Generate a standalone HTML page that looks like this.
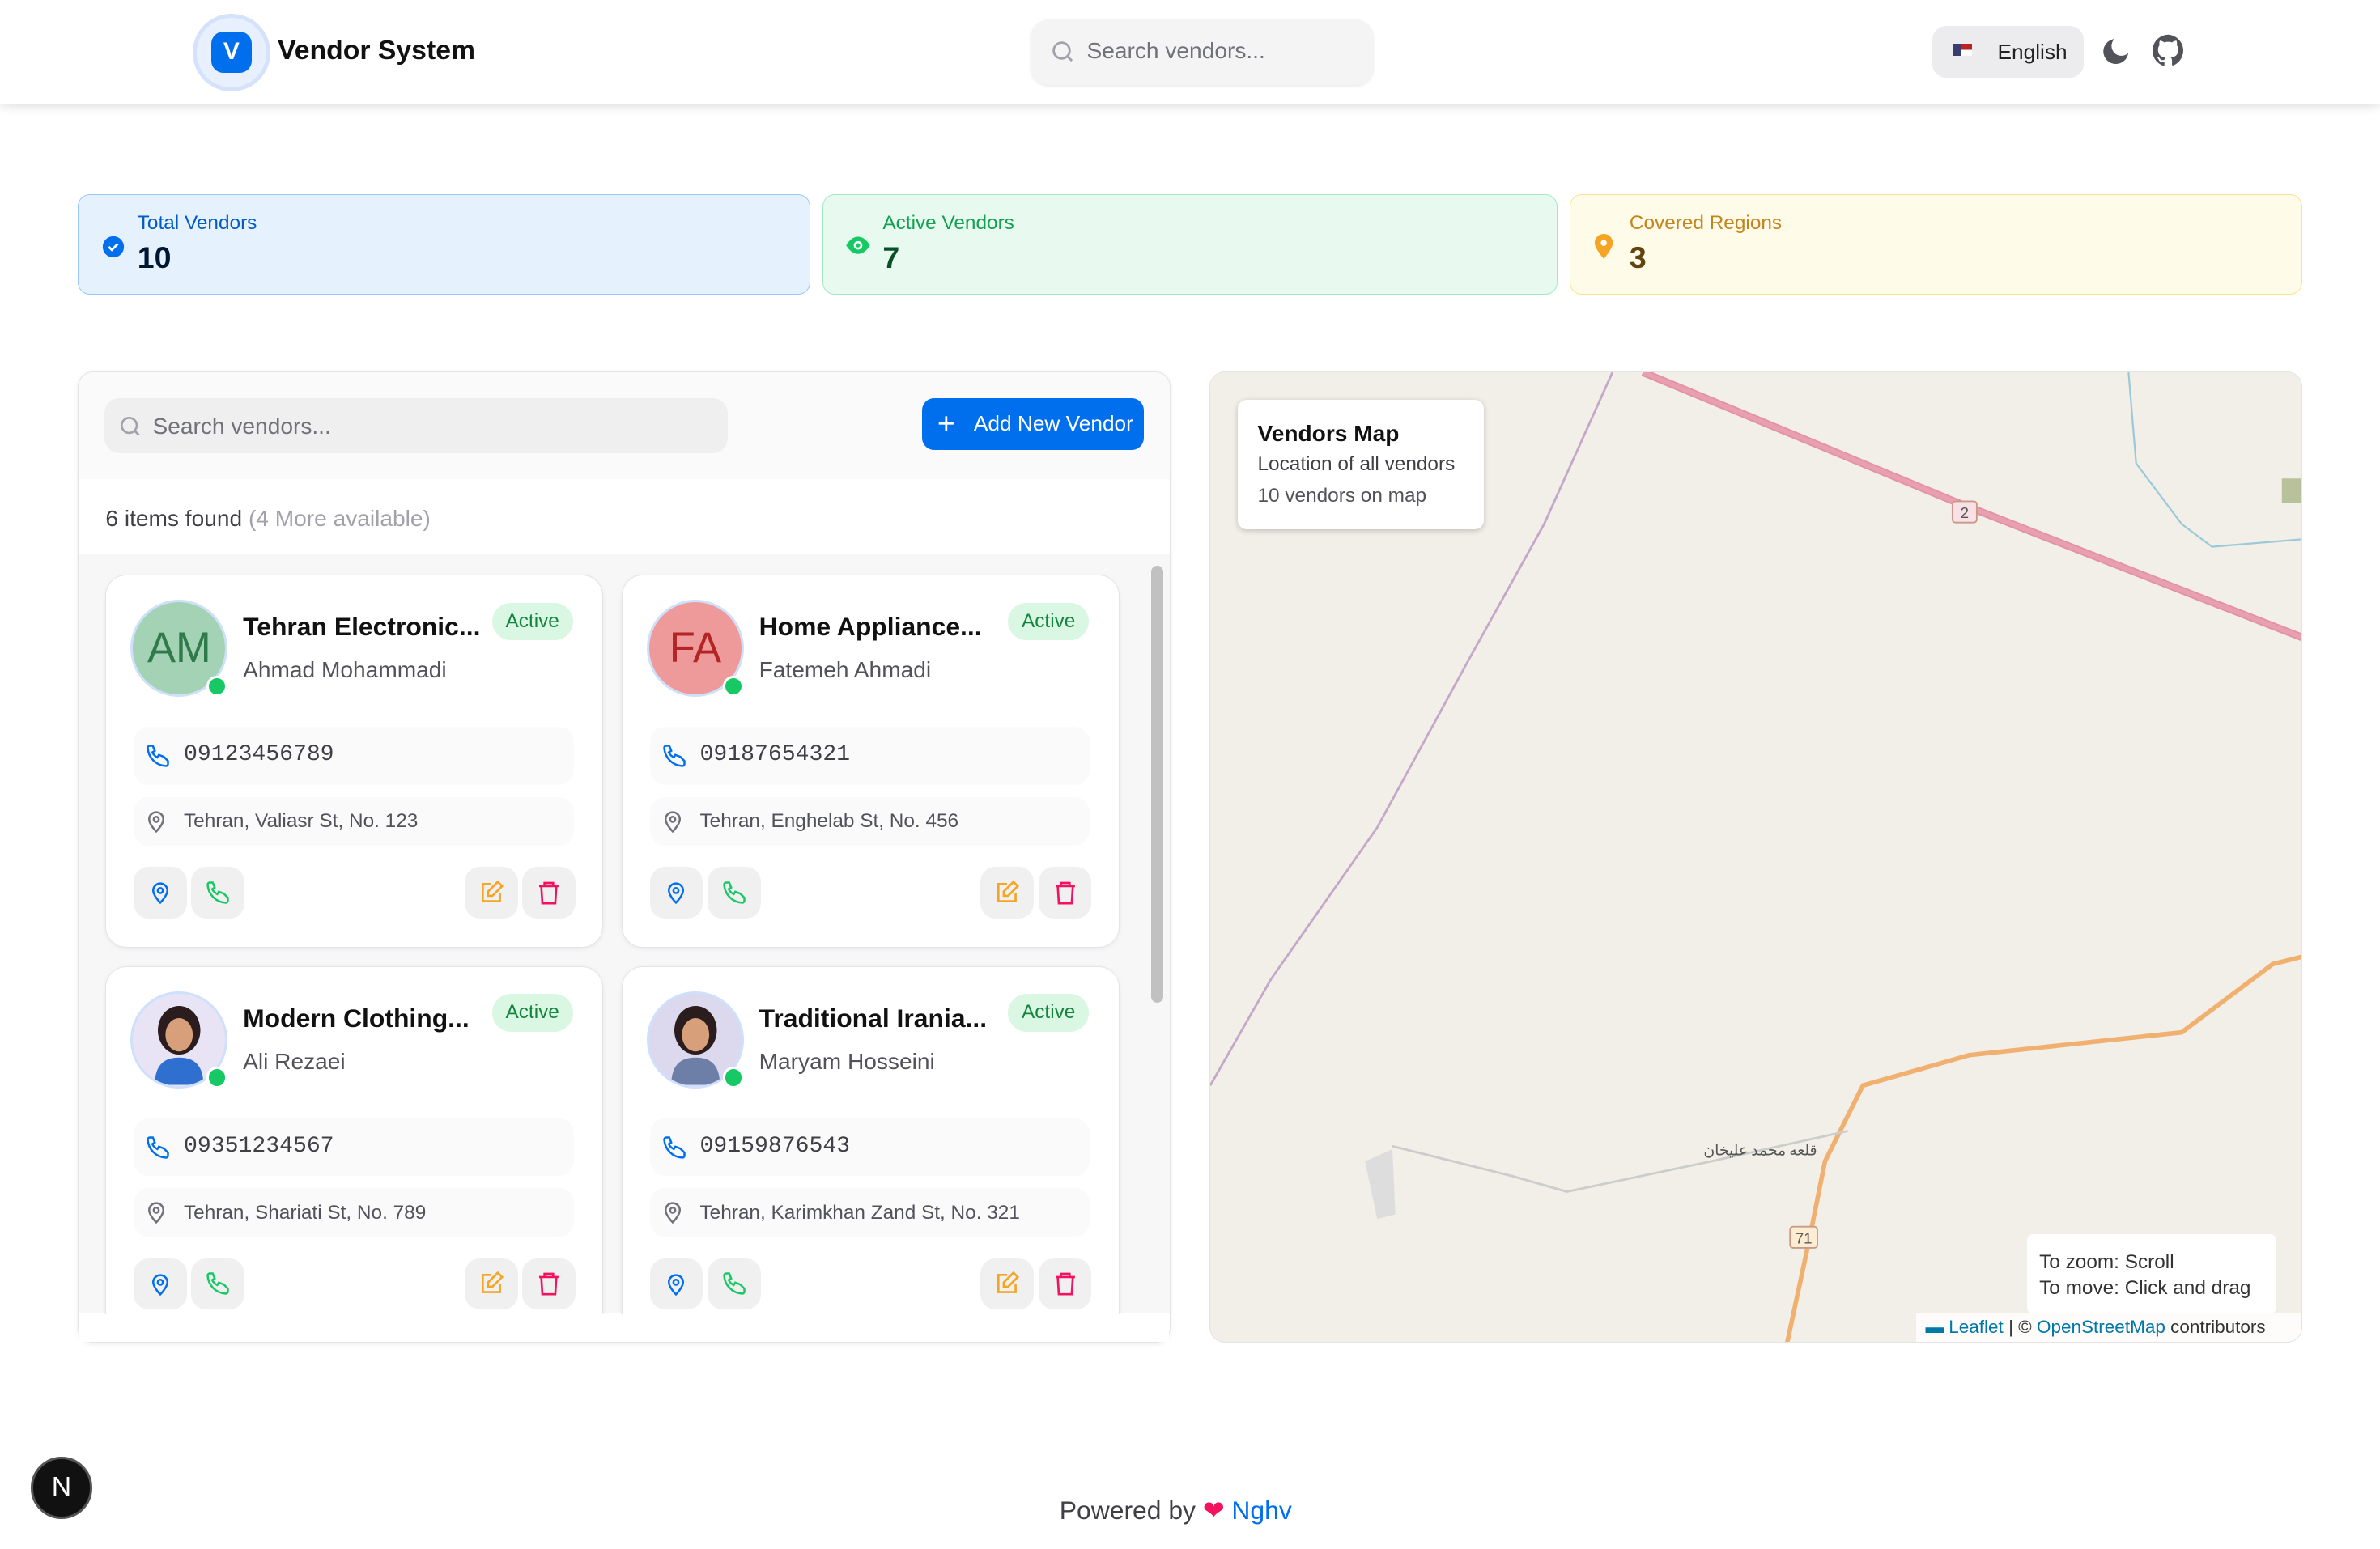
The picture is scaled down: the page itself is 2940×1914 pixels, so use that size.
<!DOCTYPE html>
<html><head><meta charset="utf-8"><style>
html{zoom:1.875}
*{box-sizing:border-box;margin:0;padding:0}
body{width:1568px;height:1021px;background:#fff;font-family:"Liberation Sans",sans-serif;position:relative;overflow:hidden;color:#111}
.abs{position:absolute}
.hdr{left:0;top:0;width:1568px;height:68px;background:#fff;box-shadow:0 2px 6px rgba(0,0,0,.12)}
.stat{top:128px;height:66px;border-radius:8px;border:1px solid}
.stat .l{position:absolute;left:39px;top:11px;font-size:13px}
.stat .n{position:absolute;left:39px;top:30px;font-size:20px;font-weight:bold}
.panel{left:51px;top:245px;width:720px;height:640px;border:1px solid #e4e4e7;border-radius:10px;background:#fafafa;box-shadow:0 1px 3px rgba(0,0,0,.08);overflow:hidden}
.card{width:328px;height:246px;background:#fff;border:1px solid #e4e4e7;border-radius:14px;box-shadow:0 1px 3px rgba(0,0,0,.06)}
.av{left:16px;top:16px;width:64px;height:64px;border-radius:50%;border:2px solid #cfe0fb;font-size:28px;display:flex;align-items:center;justify-content:center;overflow:hidden}
.dot{left:66px;top:66px;width:14px;height:14px;border-radius:50%;background:#17c964;border:2px solid #fff}
.ti{left:90px;top:24px;font-size:17px;font-weight:bold;width:165px;white-space:nowrap;overflow:hidden;text-overflow:ellipsis}
.sub{left:90px;top:54px;font-size:15px;color:#52525b}
.badge{left:254px;top:18px;height:25px;padding:0 9px;border-radius:13px;background:#d9f7e2;color:#12843e;font-size:13px;line-height:25px}
.row{left:18px;width:290px;border-radius:10px;background:#fafafa}
.btn{top:192px;width:35px;height:34px;border-radius:10px;background:#f0f0f1;display:flex;align-items:center;justify-content:center}
</style></head><body>
<div class="abs hdr">
 <div class="abs" style="left:127px;top:9px;width:51px;height:51px;border-radius:50%;border:3px solid #d4e3fb;background:#e8f0fd"></div>
 <div class="abs" style="left:139px;top:21px;width:27px;height:27px;border-radius:8px;background:#006fee;color:#fff;font-size:16px;font-weight:bold;text-align:center;line-height:27px">V</div>
 <div class="abs" style="left:183px;top:23px;font-size:18px;font-weight:bold">Vendor System</div>
 <div class="abs" style="left:679px;top:13px;width:226px;height:43px;border-radius:12px;background:#f4f4f5;box-shadow:0 1px 2px rgba(0,0,0,.08)"></div>
 <svg class="abs" style="left:691px;top:25px" width="18" height="18" viewBox="0 0 24 24" fill="none" stroke="#a1a1aa" stroke-width="2"><circle cx="11" cy="11" r="7"/><path d="M20 20l-4-4"/></svg>
 <div class="abs" style="left:716px;top:25px;font-size:15px;color:#71717a">Search vendors...</div>
 <div class="abs" style="left:1273px;top:17px;width:100px;height:34px;border-radius:9px;background:#ececee"></div>
 <div class="abs" style="left:1287px;top:29px;width:12px;height:8px;background:linear-gradient(#b22 0 50%,#fff 50%);border-left:5px solid #3c3b6e"></div>
 <div class="abs" style="left:1316px;top:26px;font-size:14px;color:#222">English</div>
 <svg class="abs" style="left:1383px;top:23px" width="22" height="22" viewBox="0 0 24 24"><path d="M21 13A9 9 0 1 1 11 3a7 7 0 0 0 10 10z" fill="#52525b"/></svg>
 <svg class="abs" style="left:1417px;top:22px" width="23" height="23" viewBox="0 0 24 24"><path fill="#52525b" d="M12 1a11 11 0 0 0-3.5 21.4c.6.1.8-.2.8-.5v-2c-3.1.7-3.8-1.4-3.8-1.4-.5-1.3-1.2-1.6-1.2-1.6-1-.7.1-.7.1-.7 1.1.1 1.7 1.1 1.7 1.1 1 1.7 2.6 1.2 3.2.9.1-.7.4-1.2.7-1.5-2.5-.3-5.1-1.2-5.1-5.5 0-1.2.4-2.2 1.1-3-.1-.3-.5-1.4.1-3 0 0 .9-.3 3 1.1a10.4 10.4 0 0 1 5.5 0c2.1-1.4 3-1.1 3-1.1.6 1.6.2 2.7.1 3 .7.8 1.1 1.8 1.1 3 0 4.3-2.6 5.2-5.1 5.5.4.4.8 1 .8 2v3c0 .3.2.6.8.5A11 11 0 0 0 12 1z"/></svg>
</div>

<div class="abs stat" style="left:51px;width:483px;background:#e6f1fe;border-color:#99c7fb"><svg class="abs" style="left:15px;top:26px" width="16" height="16" viewBox="0 0 16 16"><circle cx="8" cy="8" r="7" fill="#006fee"/><path d="M5 8l2 2 4-4" stroke="#fff" stroke-width="1.5" fill="none"/></svg><div class="l" style="color:#005bc4">Total Vendors</div><div class="n" style="color:#001731">10</div></div>
<div class="abs stat" style="left:542px;width:484px;background:#e8faf0;border-color:#a2e9c1"><svg class="abs" style="left:14px;top:26px" width="17" height="14" viewBox="0 0 24 18"><path d="M1 9s4-8 11-8 11 8 11 8-4 8-11 8S1 9 1 9z" fill="#17c964"/><circle cx="12" cy="9" r="4" fill="#fff"/><circle cx="12" cy="9" r="2" fill="#17c964"/></svg><div class="l" style="color:#12a150">Active Vendors</div><div class="n" style="color:#095028">7</div></div>
<div class="abs stat" style="left:1034px;width:483px;background:#fefce8;border-color:#fbe38e"><svg class="abs" style="left:15px;top:25px" width="14" height="18" viewBox="0 0 14 18"><path d="M7 17S1 10 1 6.5a6 6 0 0 1 12 0C13 10 7 17 7 17z" fill="#f5a524"/><circle cx="7" cy="6.5" r="2" fill="#fff"/></svg><div class="l" style="color:#c4841d">Covered Regions</div><div class="n" style="color:#62420e">3</div></div>

<div class="abs panel">
 <div class="abs" style="left:17px;top:17px;width:411px;height:36px;border-radius:10px;background:#efeff0"></div>
 <svg class="abs" style="left:26px;top:27px" width="17" height="17" viewBox="0 0 24 24" fill="none" stroke="#a1a1aa" stroke-width="2"><circle cx="11" cy="11" r="7"/><path d="M20 20l-4-4"/></svg>
 <div class="abs" style="left:49px;top:27px;font-size:15px;color:#71717a">Search vendors...</div>
 <div class="abs" style="left:556px;top:17px;width:146px;height:34px;border-radius:8px;background:#006fee;color:#fff;font-size:14px;line-height:34px;padding-left:34px">Add New Vendor</div>
 <div class="abs" style="left:566px;top:25px;color:#fff;font-size:20px;line-height:18px">+</div>
 <div class="abs" style="left:0;top:70px;width:720px;height:570px;background:#fff"></div>
 <div class="abs" style="left:18px;top:88px;font-size:15px;color:#3f3f46">6 items found <span style="color:#a1a1aa">(4 More available)</span></div>
 <div class="abs" style="left:0;top:120px;width:720px;height:500px;background:#f7f7f8"></div>
 <div class="abs" style="left:707px;top:127px;width:8px;height:288px;border-radius:4px;background:#c1c1c1"></div>
 <!-- cards -->
 <div id="c"></div>
</div>

<!-- map -->
<div class="abs" style="left:797px;top:245px;width:720px;height:640px;border:1px solid #e4e4e7;border-radius:10px;overflow:hidden;background:#f2efe9">
 <svg class="abs" style="left:0;top:0" width="720" height="640">
  <path d="M0 470 L40 400 L110 300 L170 190 L220 100 L265 0" stroke="#c4a8c8" stroke-width="1.5" fill="none"/>
  <path d="M285 0 L490 85 L720 175" stroke="#e392a5" stroke-width="5" fill="none"/>
  <path d="M285 0 L490 85 L720 175" stroke="#e8a0b0" stroke-width="3" fill="none"/>
  <path d="M380 640 L395 570 L405 520 L430 470 L500 450 L640 435 L700 390 L720 385" stroke="#f0b070" stroke-width="3" fill="none"/>
  <path d="M120 510 L200 530 L235 540 L330 520 L420 500" stroke="#ccc" stroke-width="1.5" fill="none"/>
  <path d="M605 0 L610 60 L640 100 L660 115 L720 110" stroke="#9cc9d8" stroke-width="1.2" fill="none"/>
  <rect x="706" y="70" width="14" height="16" fill="#b7c29a"/>
  <rect x="489" y="85" width="16" height="14" rx="2" fill="#f7e0e6" stroke="#c98"/>
  <text x="497" y="96" font-size="10" text-anchor="middle" fill="#555" font-family="Liberation Sans">2</text>
  <rect x="382" y="563" width="18" height="14" rx="2" fill="#fbecd2" stroke="#c98"/>
  <text x="391" y="574" font-size="10" text-anchor="middle" fill="#555" font-family="Liberation Sans">71</text>
  <path d="M102 520 L120 512 L122 555 L110 558 Z" fill="#ddd"/>
  <text x="325" y="516" font-size="10" fill="#555" font-family="Noto Sans CJK SC,sans-serif">قلعه محمد علیخان</text>
 </svg>
 <div class="abs" style="left:18px;top:18px;width:162px;height:85px;background:#fff;border-radius:6px;box-shadow:0 1px 4px rgba(0,0,0,.2)">
  <div class="abs" style="left:13px;top:14px;font-size:15px;font-weight:bold">Vendors Map</div>
  <div class="abs" style="left:13px;top:35px;font-size:13px;color:#3f3f46">Location of all vendors</div>
  <div class="abs" style="left:13px;top:56px;font-size:13px;color:#52525b">10 vendors on map</div>
 </div>
 <div class="abs" style="left:538px;top:568px;width:164px;height:52px;background:#fff;border-radius:4px;font-size:13px;color:#333;padding:10px 8px;line-height:17px">To zoom: Scroll<br>To move: Click and drag</div>
 <div class="abs" style="left:465px;top:620px;width:255px;height:20px;background:rgba(255,255,255,.8);font-size:12px;color:#333;padding:2px 6px"><span style="color:#0078a8">▬ Leaflet</span> | © <span style="color:#0078a8">OpenStreetMap</span> contributors</div>
</div>

<div class="abs" style="left:20px;top:960px;width:41px;height:41px;border-radius:50%;background:#111;border:2px solid #555;color:#fff;font-size:18px;text-align:center;line-height:37px">N</div>
<div class="abs" style="left:698px;top:985px;font-size:17px;color:#3f3f46">Powered by <span style="color:#f31260">❤</span> <span style="color:#006fee">Nghv</span></div>

<script>
var d=[["AM","#a3d2b4","#2f7a4a","Tehran Electronic...","Ahmad Mohammadi","09123456789","Tehran, Valiasr St, No. 123"],
["FA","#ee9a9a","#b32424","Home Appliance...","Fatemeh Ahmadi","09187654321","Tehran, Enghelab St, No. 456"],
["","#e8e4f5","","Modern Clothing...","Ali Rezaei","09351234567","Tehran, Shariati St, No. 789"],
["","#dcd8ee","","Traditional Irania...","Maryam Hosseini","09159876543","Tehran, Karimkhan Zand St, No. 321"]];
var pos=[[18,133],[358,133],[18,391],[358,391]],h="";
var pin='<svg width="16" height="18" viewBox="0 0 24 24" fill="none" stroke="C" stroke-width="2"><path d="M12 22s-7-7-7-12a7 7 0 0 1 14 0c0 5-7 12-7 12z"/><circle cx="12" cy="10" r="2.5"/></svg>';
var ph='<svg width="16" height="16" viewBox="0 0 24 24" fill="none" stroke="C" stroke-width="2"><path d="M22 17v3a2 2 0 0 1-2 2A19 19 0 0 1 2 4a2 2 0 0 1 2-2h3l2 5-2.5 1.5a11 11 0 0 0 5 5L13 11l5 2z"/></svg>';
d.forEach(function(v,i){var p=pos[i];
var av=v[0]?'<div class="abs av" style="background:'+v[1]+';color:'+v[2]+'">'+v[0]+'</div>':'<div class="abs av" style="background:'+v[1]+'"><svg width="60" height="60" viewBox="0 0 60 60"><path d="M14 60c0-14 7-18 16-18s16 4 16 18z" fill="'+(i==2?'#2f6fd0':'#6d7fa6')+'"/><ellipse cx="30" cy="24" rx="14" ry="16" fill="#2b1d1d"/><ellipse cx="30" cy="27" rx="9" ry="11" fill="#d8a07a"/></svg></div>';
h+='<div class="abs card" style="left:'+p[0]+'px;top:'+p[1]+'px">'+av+'<div class="abs dot"></div><div class="abs ti">'+v[3]+'</div><div class="abs sub">'+v[4]+'</div><div class="abs badge">Active</div>'+
'<div class="abs row" style="top:100px;height:38px"><div class="abs" style="left:8px;top:11px">'+ph.replace('C','#006fee')+'</div><div class="abs" style="left:33px;top:10px;font-family:Liberation Mono,monospace;font-size:15px;color:#3f3f46">'+v[5]+'</div></div>'+
'<div class="abs row" style="top:146px;height:32px"><div class="abs" style="left:7px;top:7px">'+pin.replace('C','#71717a')+'</div><div class="abs" style="left:33px;top:9px;font-size:13px;color:#52525b">'+v[6]+'</div></div>'+
'<div class="abs btn" style="left:18px">'+pin.replace('C','#006fee')+'</div><div class="abs btn" style="left:56px">'+ph.replace('C','#17c964')+'</div>'+
'<div class="abs btn" style="left:236px"><svg width="17" height="17" viewBox="0 0 24 24" fill="none" stroke="#f5a524" stroke-width="2"><path d="M12 4H4v16h16v-8"/><path d="M18 2l4 4-9 9H9v-4z"/></svg></div>'+
'<div class="abs btn" style="left:274px"><svg width="17" height="17" viewBox="0 0 24 24" fill="none" stroke="#f31260" stroke-width="2"><path d="M3 6h18M8 6V3h8v3M5 6l1 16h12l1-16"/></svg></div></div>';});
document.getElementById('c').outerHTML=h;
</script>
<div class="abs" style="left:52px;top:866px;width:718px;height:18px;background:#fff"></div>
</body></html>
